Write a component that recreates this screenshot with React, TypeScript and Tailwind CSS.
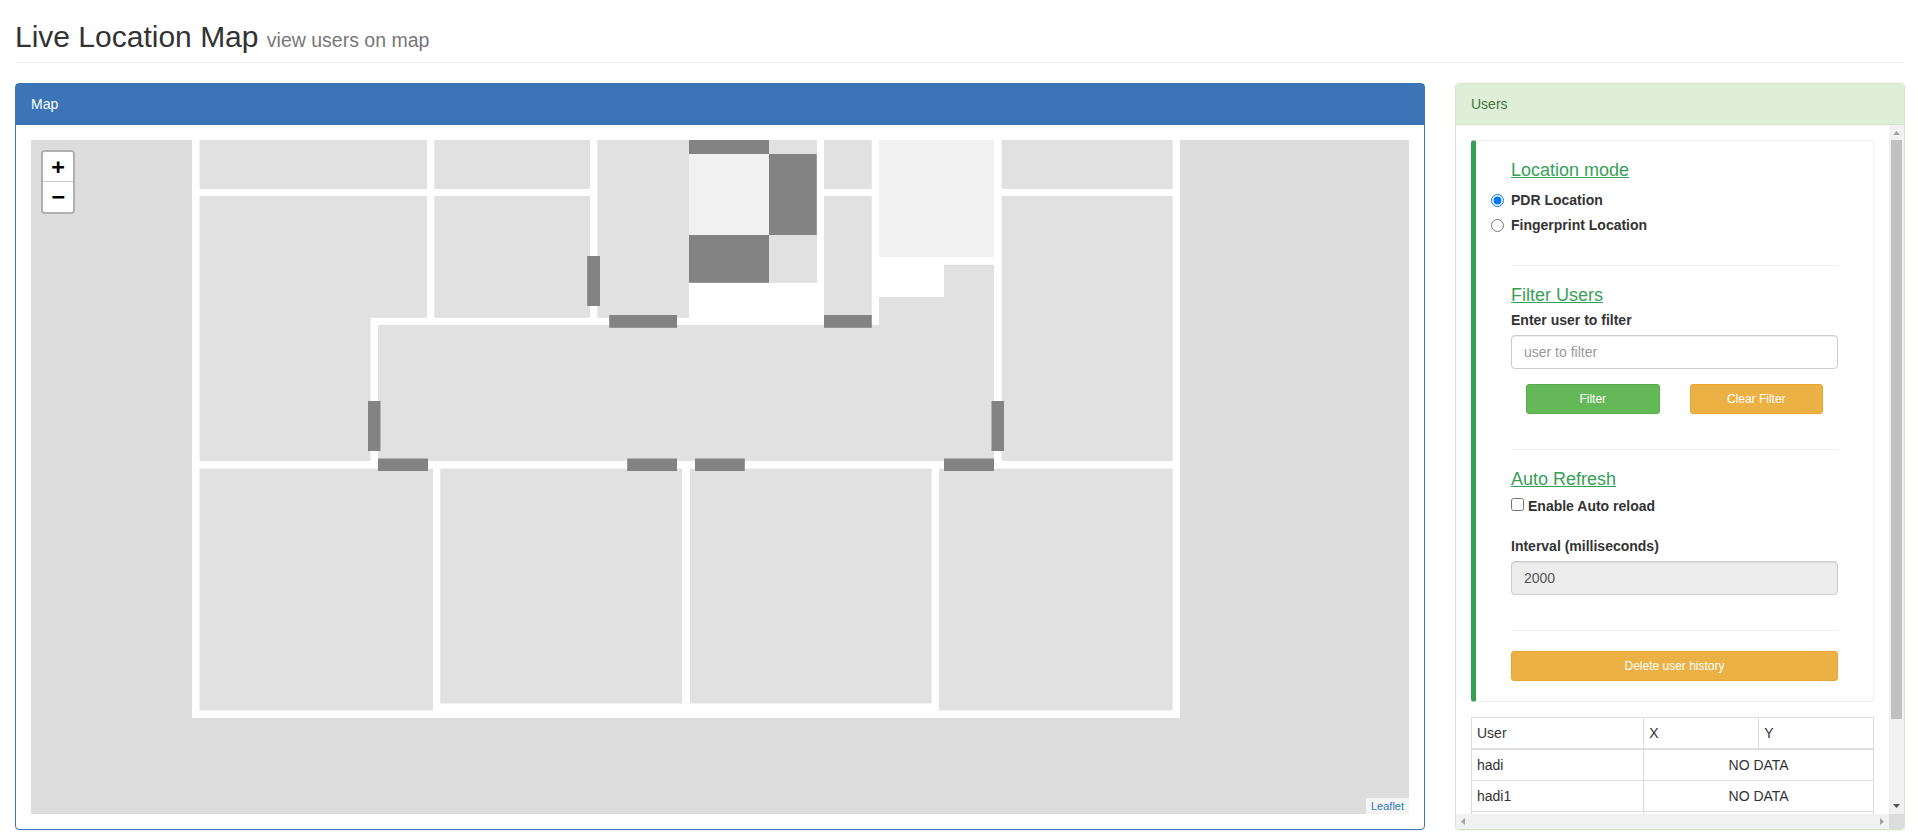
import { useState, type ReactNode } from "react";

type Box = [x: number, y: number, w: number, h: number];

const rooms: Box[] = [
  [168.5, 0, 227.5, 49],
  [403.3, 0, 155.7, 49],
  [403.3, 56, 155.7, 121.8],
  [566.3, 0, 91.7, 177.8],
  [738, 0, 48, 14],
  [738, 95, 48, 47.8],
  [793, 0, 47.8, 49],
  [793, 56, 47.8, 122],
  [970.6, 0, 171, 49],
  [970.6, 56, 171, 265],
  [168.5, 328.6, 233.5, 241.8],
  [409.2, 328.6, 241.8, 234.8],
  [659, 328.6, 241.6, 234.8],
  [908, 328.6, 233.6, 241.8],
];

const lightAreas: Box[] = [
  [658, 14, 80, 81],
  [848, 0, 115, 117],
];

const darkAreas: Box[] = [
  [658, 0, 80, 14],
  [738, 14, 47.8, 81],
  [658, 95, 80, 47.8],
  [556.2, 116, 12.8, 50],
  [578.2, 175, 67.8, 12.8],
  [793, 175, 47.8, 12.8],
  [337, 261, 12.5, 50],
  [960.5, 261, 12.5, 50],
  [347, 318.5, 50, 12.5],
  [596.2, 318.5, 49.8, 12.5],
  [664, 318.5, 49.8, 12.5],
  [913, 318.5, 50, 12.5],
];

function Boxes({ items, fill }: { items: Box[]; fill: string }) {
  return (
    <g fill={fill}>
      {items.map(([x, y, width, height]) => (
        <rect key={`${x}-${y}`} x={x} y={y} width={width} height={height} />
      ))}
    </g>
  );
}

function FloorPlan() {
  return (
    <svg
      viewBox="0 0 1378 674"
      preserveAspectRatio="xMidYMid slice"
      className="block h-full w-full"
      role="img"
      aria-label="Floor plan"
    >
      <rect x="161" y="0" width="988" height="578" fill="#ffffff" />
      <Boxes items={rooms} fill="#e1e1e1" />
      <path d="M168.5 56H396V177.8H339.5V321H168.5Z" fill="#e1e1e1" />
      <path d="M347 185H848V157H913V124.7H963V321H347Z" fill="#e1e1e1" />
      <Boxes items={lightAreas} fill="#f1f1f1" />
      <Boxes items={darkAreas} fill="#838383" />
    </svg>
  );
}

function MapPanel() {
  return (
    <section className="flex flex-col rounded-[4px] border border-[#3c75b7] bg-white shadow-[0_1px_1px_rgba(0,0,0,0.05)]">
      <div className="bg-[#3c75b7] px-[15px] py-[10px] leading-[21px] text-white">Map</div>
      <div className="flex-1 p-[15px]">
        <div className="relative h-full overflow-hidden bg-[#dddddd]">
          <FloorPlan />
          <div className="absolute top-[10px] left-[10px] flex flex-col rounded-[4px] border-2 border-black/20 bg-clip-padding text-center indent-[1px] font-['DejaVu_Sans_Mono',monospace] text-[22px] leading-[30px] font-bold text-black">
            <button
              type="button"
              aria-label="Zoom in"
              className="h-[30px] w-[30px] rounded-t-[2px] border-b border-[#cccccc] bg-white"
            >
              +
            </button>
            <button
              type="button"
              aria-label="Zoom out"
              className="h-[30px] w-[30px] rounded-b-[2px] bg-white"
            >
              −
            </button>
          </div>
          <div className="absolute right-0 bottom-0 bg-white/70 px-[5px] text-[11px] leading-[16px]">
            <a href="#leaflet" className="text-[#337ab7]">
              Leaflet
            </a>
          </div>
        </div>
      </div>
    </section>
  );
}

function SectionTitle({ children }: { children: ReactNode }) {
  return <h2 className="text-[18px] leading-[20px] text-[#37a058] underline">{children}</h2>;
}

function Divider() {
  return <hr className="border-t border-[#eeeeee]" />;
}

const buttonBase = "h-[30px] rounded-[3px] border text-[12px] leading-[18px] text-white";
const warning = "border-[#e9a52f] bg-[#ebb145]";
const field =
  "h-[34px] w-full rounded-[4px] border border-[#cccccc] px-[12px] text-[14px] text-[#555555] shadow-[inset_0_1px_1px_rgba(0,0,0,0.075)] placeholder:text-[#999999]";

function Settings() {
  const [mode, setMode] = useState("pdr");
  const [auto, setAuto] = useState(false);
  const modes = [
    { id: "pdr", label: "PDR Location" },
    { id: "fingerprint", label: "Fingerprint Location" },
  ];
  return (
    <form
      onSubmit={(e) => e.preventDefault()}
      className="rounded-[3px] border border-l-[5px] border-[#eeeeee] border-l-[#37a058] px-[35px] pt-[19px] pb-[20px]"
    >
      <SectionTitle>Location mode</SectionTitle>
      <div className="mt-[10px] flex flex-col gap-[5px]">
        {modes.map((m) => (
          <label key={m.id} className="-ml-[20px] flex h-[20px] items-center gap-[7px] font-bold">
            <input
              type="radio"
              name="mode"
              className="m-0 size-[13px]"
              checked={mode === m.id}
              onChange={() => setMode(m.id)}
            />
            {m.label}
          </label>
        ))}
      </div>
      <div className="pt-[30px] pb-[19px]">
        <Divider />
      </div>

      <SectionTitle>Filter Users</SectionTitle>
      <label htmlFor="user-filter" className="mt-[5px] mb-[5px] block font-bold">
        Enter user to filter
      </label>
      <input id="user-filter" type="text" placeholder="user to filter" className={`${field} bg-white`} />
      <div className="mt-[15px] grid grid-cols-2 gap-[30px] px-[15px]">
        <button type="submit" className={`${buttonBase} border-[#57ad49] bg-[#65b857]`}>
          Filter
        </button>
        <button type="button" className={`${buttonBase} ${warning}`}>
          Clear Filter
        </button>
      </div>
      <div className="pt-[35px] pb-[19px]">
        <Divider />
      </div>

      <SectionTitle>Auto Refresh</SectionTitle>
      <label className="mt-[7px] flex h-[20px] items-start gap-[4px] font-bold">
        <input
          type="checkbox"
          className="mt-[2px] size-[13px]"
          checked={auto}
          onChange={(e) => setAuto(e.target.checked)}
        />
        Enable Auto reload
      </label>
      <label htmlFor="interval" className="mt-[20px] mb-[5px] block font-bold">
        Interval (milliseconds)
      </label>
      <input
        id="interval"
        type="text"
        defaultValue="2000"
        disabled={!auto}
        className={`${field} bg-[#ededed]`}
      />
      <div className="pt-[35px] pb-[20px]">
        <Divider />
      </div>
      <button type="button" className={`${buttonBase} ${warning} block w-full`}>
        Delete user history
      </button>
    </form>
  );
}

const users = ["hadi", "hadi1"];

function UsersTable() {
  const cell = "border border-[#dddddd] p-[5px]";
  return (
    <table className="mt-[15px] w-full table-fixed border-collapse">
      <colgroup>
        <col className="w-3/7" />
        <col />
        <col />
      </colgroup>
      <thead>
        <tr className="text-left">
          <th className={`${cell} border-b-2 font-normal`}>User</th>
          <th className={`${cell} border-b-2 font-normal`}>X</th>
          <th className={`${cell} border-b-2 font-normal`}>Y</th>
        </tr>
      </thead>
      <tbody>
        {users.map((u) => (
          <tr key={u}>
            <td className={cell}>{u}</td>
            <td colSpan={2} className={`${cell} text-center`}>
              NO DATA
            </td>
          </tr>
        ))}
        <tr className="h-[31px]">
          <td className={cell} />
          <td colSpan={2} className={cell} />
        </tr>
      </tbody>
    </table>
  );
}

function Arrow({ d, fill }: { d: string; fill: string }) {
  return (
    <svg width="15" height="15" viewBox="0 0 15 15" className="block shrink-0" aria-hidden="true">
      <path d={d} fill={fill} />
    </svg>
  );
}

function UsersPanel() {
  return (
    <section className="flex min-h-0 flex-col overflow-hidden rounded-[4px] border border-[#d5e8c3] bg-white shadow-[0_1px_1px_rgba(0,0,0,0.05)]">
      <div className="border-b border-[#d5e8c3] bg-[#dfeed6] px-[15px] py-[10px] text-[#417541]">Users</div>
      <div className="grid min-h-0 flex-1 grid-cols-[1fr_15px] grid-rows-[1fr_15px]">
        <div className="h-[689px] overflow-hidden p-[15px]">
          <Settings />
          <UsersTable />
        </div>
        <div className="flex flex-col bg-[#f1f1f1]">
          <Arrow d="M4 10L7.5 6L11 10Z" fill="#a3a3a3" />
          <div className="mx-[2px] h-[579px] bg-[#c1c1c1]" />
          <div className="flex-1" />
          <Arrow d="M4 5L7.5 9L11 5Z" fill="#505050" />
        </div>
        <div className="flex justify-between bg-[#f1f1f1]">
          <Arrow d="M9 4L5 7.5L9 11Z" fill="#a3a3a3" />
          <Arrow d="M6 4L10 7.5L6 11Z" fill="#a3a3a3" />
        </div>
        <div className="bg-[#dcdcdc]" />
      </div>
    </section>
  );
}

export default function App() {
  return (
    <main className="bg-white pr-[13px] pb-[7px] pl-[15px] font-['Liberation_Sans',Arial,sans-serif] text-[14px] leading-[20px] text-[#333333]">
      <header className="border-b border-[#eeeeee] pt-[20px] pb-[9px]">
        <h1 className="text-[30px] leading-[33px]">
          Live Location Map <small className="text-[65%] leading-none text-[#777777]">view users on map</small>
        </h1>
      </header>
      <div className="mt-[20px] grid grid-cols-[47fr_15fr] gap-[30px]">
        <MapPanel />
        <UsersPanel />
      </div>
    </main>
  );
}
